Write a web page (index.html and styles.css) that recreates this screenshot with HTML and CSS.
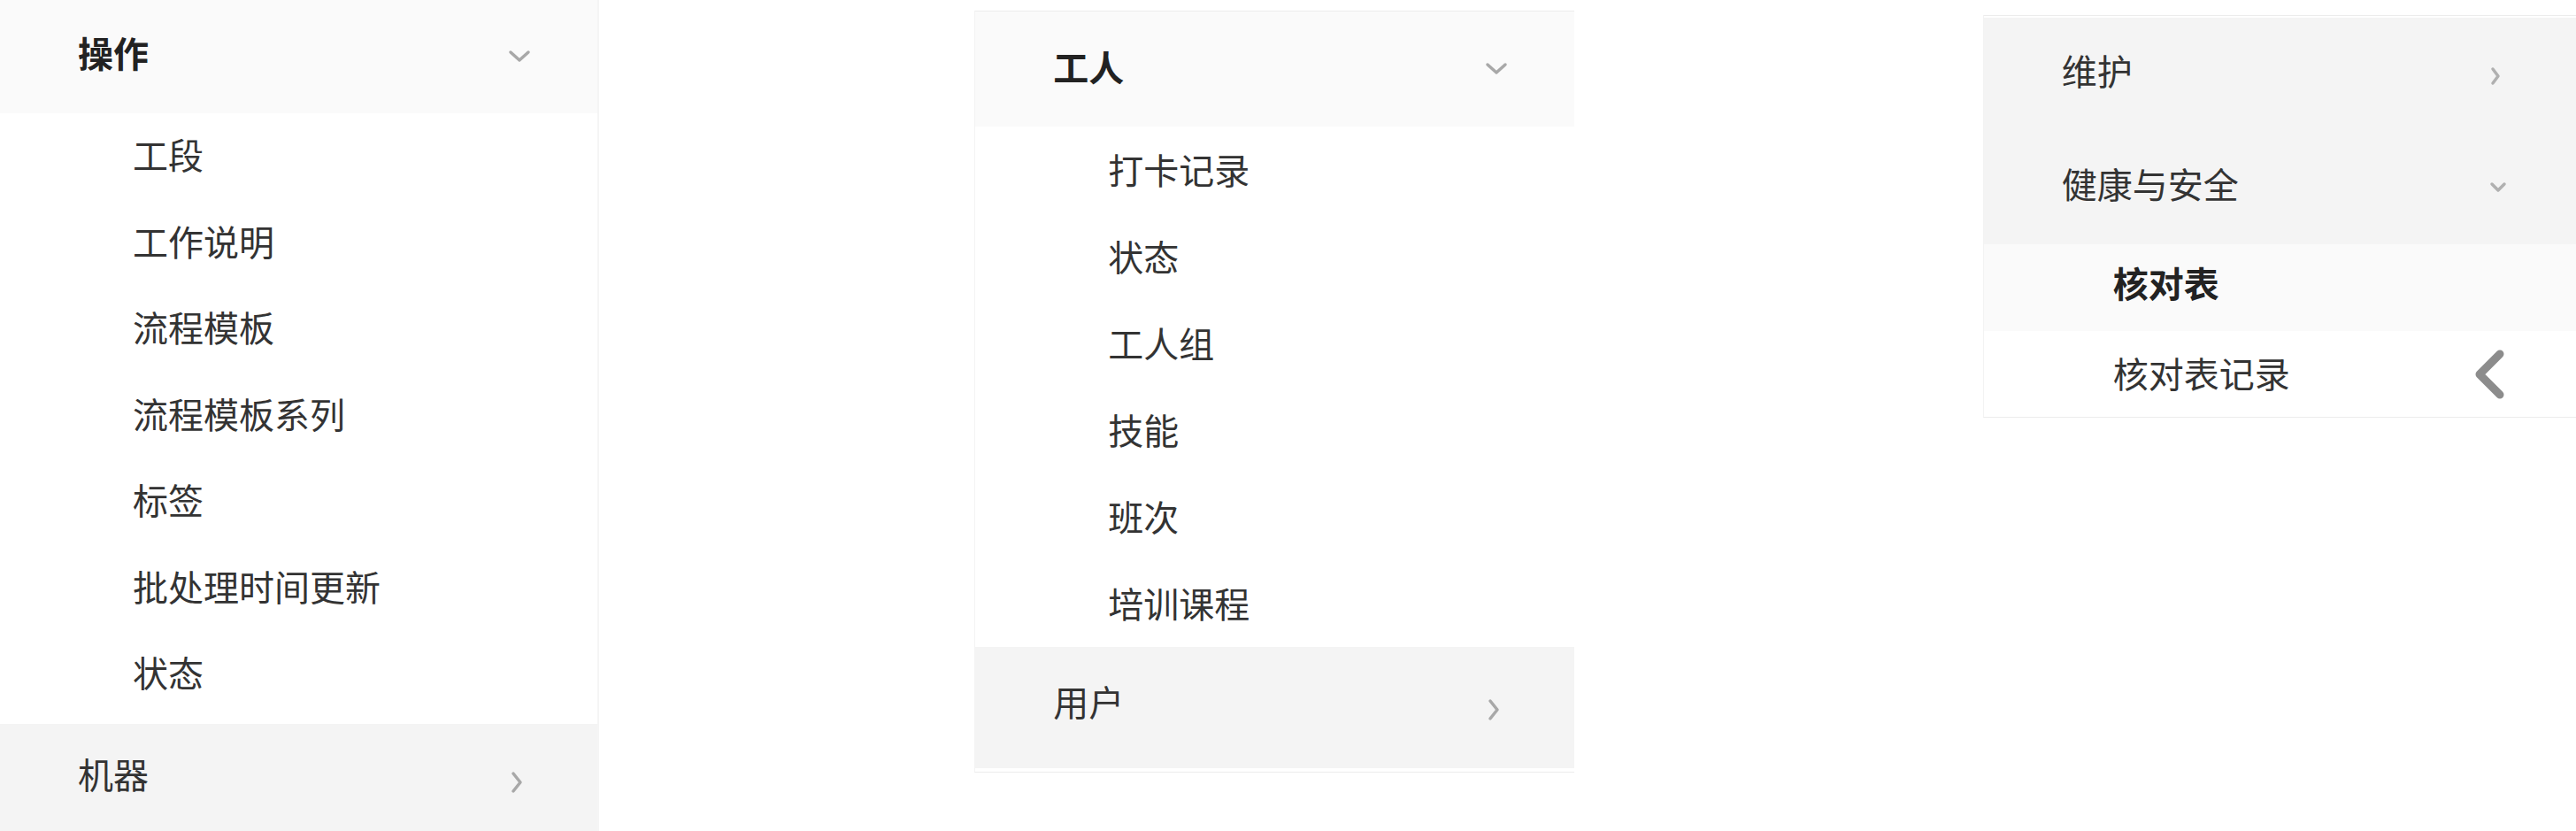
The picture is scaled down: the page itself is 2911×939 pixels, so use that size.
FILE: index.html
```html
<!DOCTYPE html>
<html lang="zh-CN">
<head>
<meta charset="utf-8">
<title>Menu</title>
<link rel="stylesheet" href="styles.css">
</head>
<body>
<div class="canvas">
  <nav class="panel panel-one">
    <div class="row row-open">
      <span class="title bold">操作</span>
      <span class="icon"><svg width="26" height="16" viewBox="0 0 26 16"><polyline points="3,3 13,12 23,3" fill="none" stroke="#a8a8a8" stroke-width="3.5" stroke-linecap="round" stroke-linejoin="round"/></svg></span>
    </div>
    <ul class="sub sub-one">
      <li class="item">工段</li>
      <li class="item">工作说明</li>
      <li class="item">流程模板</li>
      <li class="item">流程模板系列</li>
      <li class="item">标签</li>
      <li class="item">批处理时间更新</li>
      <li class="item">状态</li>
    </ul>
    <div class="row row-closed">
      <span class="title title-up">机器</span>
      <span class="icon icon-right"><svg width="14" height="26" viewBox="0 0 14 26"><polyline points="3,3 11,13 3,23" fill="none" stroke="#a8a8a8" stroke-width="3.5" stroke-linecap="round" stroke-linejoin="round"/></svg></span>
    </div>
  </nav>

  <nav class="panel panel-two">
    <div class="row row-open row-two-head">
      <span class="title title-mid bold">工人</span>
      <span class="icon"><svg width="26" height="16" viewBox="0 0 26 16"><polyline points="3,3 13,12 23,3" fill="none" stroke="#a8a8a8" stroke-width="3.5" stroke-linecap="round" stroke-linejoin="round"/></svg></span>
    </div>
    <ul class="sub">
      <li class="item item-two">打卡记录</li>
      <li class="item item-two">状态</li>
      <li class="item item-two">工人组</li>
      <li class="item item-two">技能</li>
      <li class="item item-two">班次</li>
      <li class="item item-two">培训课程</li>
    </ul>
    <div class="row row-closed row-two-foot">
      <span class="title title-up">用户</span>
      <span class="icon icon-right"><svg width="14" height="26" viewBox="0 0 14 26"><polyline points="3,3 11,13 3,23" fill="none" stroke="#a8a8a8" stroke-width="3.5" stroke-linecap="round" stroke-linejoin="round"/></svg></span>
    </div>
  </nav>

  <nav class="panel panel-three">
    <div class="row row-closed">
      <span class="title">维护</span>
      <span class="icon icon-right"><svg width="14" height="26" viewBox="0 0 14 26"><polyline points="4,5 10,13 4,21" fill="none" stroke="#b0b0b0" stroke-width="3.5" stroke-linecap="round" stroke-linejoin="round"/></svg></span>
    </div>
    <div class="row row-closed">
      <span class="title">健康与安全</span>
      <span class="icon icon-down-small"><svg width="26" height="16" viewBox="0 0 26 16"><polyline points="6,4 13,11 20,4" fill="none" stroke="#b0b0b0" stroke-width="3.5" stroke-linecap="round" stroke-linejoin="round"/></svg></span>
    </div>
    <ul class="sub">
      <li class="item item-three item-selected bold">核对表</li>
      <li class="item item-three item-with-back">
        <span>核对表记录</span>
        <span class="back"><svg width="38" height="56" viewBox="0 0 38 56"><polyline points="31,5 8,28 31,51" fill="none" stroke="#8c8c8c" stroke-width="9" stroke-linecap="round" stroke-linejoin="round"/></svg></span>
      </li>
    </ul>
  </nav>
</div>
</body>
</html>
```

FILE: styles.css
```css
html, body {
  margin: 0;
  padding: 0;
  background: #ffffff;
}

body {
  font-family: "Noto Sans CJK SC", "Microsoft YaHei", sans-serif;
  font-size: 40px;
  color: #333333;
}

.canvas {
  display: flex;
  align-items: flex-start;
  width: 2911px;
  height: 939px;
  overflow: hidden;
}

.panel {
  display: flex;
  flex-direction: column;
  box-sizing: border-box;
}

.panel-one {
  width: 678px;
  border-right: 2px solid #f5f5f5;
}

.panel-two {
  width: 678px;
  margin-left: 424px;
  margin-top: 12px;
  border-top: 1px solid #ececec;
  border-left: 1px solid #f3f3f3;
  border-bottom: 1px solid #ececec;
  padding-bottom: 4px;
}

.panel-three {
  width: 671px;
  margin-left: 462px;
  margin-top: 17px;
  border-top: 1px solid #ececec;
  border-left: 1px solid #f3f3f3;
  border-bottom: 1px solid #ececec;
  padding-top: 2px;
}

.row {
  display: flex;
  align-items: center;
  justify-content: space-between;
  height: 128px;
  padding: 0 75px 0 88px;
  box-sizing: border-box;
}

.row-open {
  background: #fafafa;
}

.row-closed {
  background: #f4f4f4;
}

.row-two-head {
  height: 130px;
}

.row-two-foot {
  height: 137px;
}

.title {
  line-height: 1;
  position: relative;
  top: -5px;
}

.title-mid {
  top: -3px;
}

.title-up {
  top: -8px;
}

.bold {
  font-weight: 700;
  color: #222222;
}

.icon {
  display: flex;
  align-items: center;
  justify-content: center;
  width: 26px;
  height: 26px;
}

.icon-right {
  position: relative;
  top: 2px;
  right: 3px;
}

.sub {
  list-style: none;
  margin: 0;
  padding: 0;
}

.sub-one {
  padding-bottom: 7px;
}

.item {
  display: flex;
  align-items: center;
  height: 97.5px;
  padding-left: 150px;
  padding-bottom: 5px;
  box-sizing: border-box;
  line-height: 1;
}

.item-two {
  height: 98px;
  padding-bottom: 3px;
}

.item-three {
  padding-left: 146px;
  height: 98px;
}

.item-selected {
  background: #fafafa;
  padding-bottom: 12px;
}

.item-with-back {
  justify-content: space-between;
  padding-right: 79px;
  padding-bottom: 3px;
  height: 97px;
}

.back {
  display: flex;
  align-items: center;
  position: relative;
  top: 2px;
}
```
